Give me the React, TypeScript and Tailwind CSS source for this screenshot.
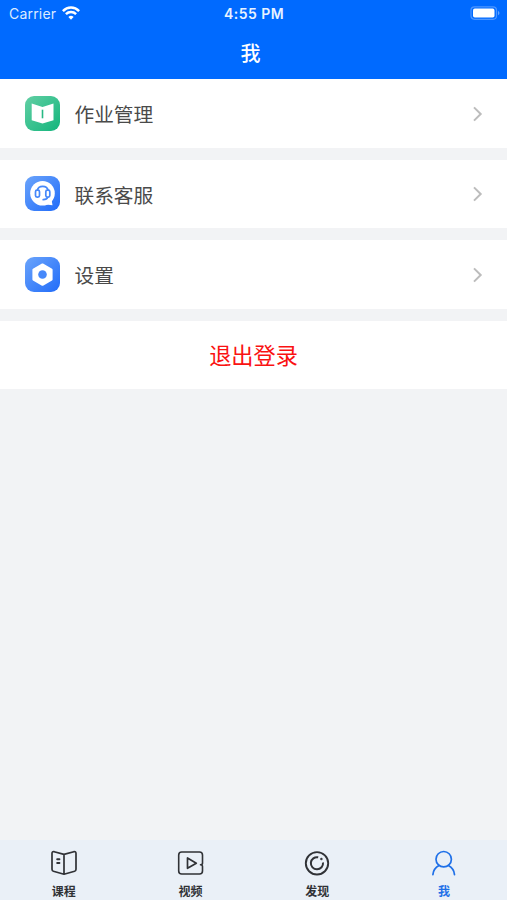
import type { ReactNode } from 'react';

function Tile({ id, from, to, children }: { id: string; from: string; to: string; children: ReactNode }) {
  return (
    <svg className="mb-[1px] h-[35px] w-[35px] shrink-0" viewBox="0 0 35 35" fill="none">
      <defs>
        <linearGradient id={id} x1="0" y1="0" x2="1" y2="1">
          <stop stopColor={from} />
          <stop offset="1" stopColor={to} />
        </linearGradient>
      </defs>
      <rect width="35" height="35" rx="9" fill={`url(#${id})`} />
      {children}
    </svg>
  );
}

const homework = (
  <Tile id="homework" from="#62cfa4" to="#13b57c">
    <path d="M6.700 7.500L17.500 11L28.500 7.500V24.200L17.500 27.600L6.700 24.200z" fill="#fff" />
    <path d="M17.500 13.700v8.600" stroke="#27b984" strokeWidth="1.600" />
  </Tile>
);

const service = (
  <Tile id="service" from="#6ba4fb" to="#216cf9">
    <circle cx="17.500" cy="17.300" r="12.300" fill="#fff" />
    <path d="M21 28.500l6.500.7-1-6z" fill="#fff" />
    <path d="M12.300 14.500c1-5.500 9.800-5.500 10.800 0M22.800 21c-.7 2.200-2.200 2.700-4.600 2.700" stroke="#4688fa" strokeWidth="1.700" strokeLinecap="round" />
    <rect x="10.500" y="14.200" width="4" height="7" rx="1.600" fill="#fff" stroke="#4688fa" strokeWidth="1.700" />
    <rect x="20.800" y="14.200" width="4" height="7" rx="1.600" fill="#fff" stroke="#4688fa" strokeWidth="1.700" />
  </Tile>
);

const settings = (
  <Tile id="settings" from="#6ba4fb" to="#216cf9">
    <path d="M17.500 7.500l9 5.100v10l-9 5.100-9-5.100v-10z" fill="#fff" stroke="#fff" strokeWidth="2.200" strokeLinejoin="round" />
    <circle cx="17.500" cy="17.500" r="4.300" fill="#4688fa" />
  </Tile>
);

function Row({ icon, label, height }: { icon: ReactNode; label: string; height: string }) {
  return (
    <button className={`flex w-full items-center bg-white pr-[24.500px] pl-[25px] text-left ${height}`}>
      {icon}
      <span className="ml-[14.500px] flex-1 pt-[3px] text-[19.700px] leading-7 text-[#4a4a4a]">{label}</span>
      <svg className="h-4 w-[11px]" viewBox="0 0 11 16" fill="none" stroke="#bcbcbc" strokeWidth="2">
        <path d="M2 1.400L8.700 8 2 14.600" />
      </svg>
    </button>
  );
}

function Tab({ label, active, children }: { label: string; active?: boolean; children: ReactNode }) {
  return (
    <button className={`flex flex-1 flex-col items-center pt-[9px] pl-[1px] ${active ? 'text-[#1f70e8]' : 'text-[#303236]'}`}>
      <svg className="h-7 w-7" viewBox="0 0 28 28" fill="none" stroke="currentColor" strokeWidth="1.700" strokeLinecap="round" strokeLinejoin="round">
        {children}
      </svg>
      <span className="mt-[7px] text-[12px] leading-4 font-bold">{label}</span>
    </button>
  );
}

export default function App() {
  return (
    <div className="flex h-[900px] w-[507px] flex-col overflow-hidden bg-[#f2f3f5] font-['Inter','Noto_Sans_CJK_SC',sans-serif]">
      <header className="h-[79px] shrink-0 bg-[#006aff] text-white">
        <div className="grid h-[27px] grid-cols-3 items-center pr-[6px] pl-[9px]">
          <div className="flex items-center gap-[6px] text-[14px] leading-[18px] text-[#dcebff]">
            <span className="tracking-[0.2px]">Carrier</span>
            <svg className="mb-[1px] h-[14px] w-[18px]" viewBox="0 0 18 14" fill="none" stroke="#fff" strokeWidth="2.500">
              <path d="M.9 5.100C5.500.4 12.500.4 17.100 5.100M3.900 8.200c2.900-2.800 7.300-2.800 10.200 0" />
              <path d="M9 13.700l-2.600-2.800q2.600-2.200 5.200 0z" fill="#fff" stroke="none" />
            </svg>
          </div>
          <span className="mr-[2px] text-center text-[14px] leading-[18px] font-semibold tracking-[0.45px] text-[#e8f2ff]">4:55 PM</span>
          <svg className="mb-[1px] h-[14px] w-[31px] justify-self-end" viewBox="0 0 31 14" fill="none">
            <rect x="1" y=".8" width="25.500" height="12.500" rx="3.500" stroke="#4d96ff" strokeWidth="1.200" />
            <rect x="3" y="2.600" width="21.500" height="8.900" rx="1.800" fill="#fff" />
            <path d="M28 4.700q3 2.300 0 4.600z" fill="#66a6ff" />
          </svg>
        </div>
        <h1 className="mt-[12px] mr-[6px] text-center text-[20px] leading-[30px] font-medium">我</h1>
      </header>
      <main className="flex flex-1 flex-col">
        <Row icon={homework} label="作业管理" height="h-[69px]" />
        <div className="h-3" />
        <Row icon={service} label="联系客服" height="h-[68px]" />
        <div className="h-3" />
        <Row icon={settings} label="设置" height="h-[69px]" />
        <div className="h-3" />
        <button className="h-[68px] w-full bg-white pt-[1px] text-[22.200px] leading-[67px] text-[#fa1212]">退出登录</button>
      </main>
      <nav className="flex h-[60px] shrink-0 bg-[#eaf0f7]">
        <Tab label="课程">
          <path d="M14 5.400L4.200 2.700Q2 2.300 2 4.500V20.200q0 1.500 1.400 2L14 25.200l10.600-3q1.400-.5 1.400-2V4.500q0-2.200-2.200-1.800zM14 5.400V25.200" />
          <path d="M7.200 10.200h2.200M7.200 14h2.200" strokeWidth="2" />
        </Tab>
        <Tab label="视频">
          <path d="M25.500 14.300V6q0-3-3-3H4.700q-3 0-3 3v16q0 3 3 3h17.800q3 0 3-3v-4.500M25.500 14.300q0 1.500-2 1.500M25.500 17.500q0-1.700-2-1.700" strokeWidth="1.600" />
          <path d="M10.500 9v10.300l8.800-5.100z" strokeWidth="1.700" />
        </Tab>
        <Tab label="发现">
          <circle cx="14" cy="14.300" r="11.200" strokeWidth="1.900" />
          <path d="M15.200 8.300A6.100 6.100 0 1 0 20 13.500" strokeWidth="2" strokeLinecap="butt" />
          <circle cx="18.400" cy="10" r=".5" strokeWidth="1.400" />
        </Tab>
        <Tab label="我" active>
          <circle cx="13.700" cy="10.200" r="7.700" />
          <path d="M9 16.600Q3.500 19.500 2.900 25.600M18.400 16.600Q23.900 19.500 24.500 25.600" />
        </Tab>
      </nav>
    </div>
  );
}
